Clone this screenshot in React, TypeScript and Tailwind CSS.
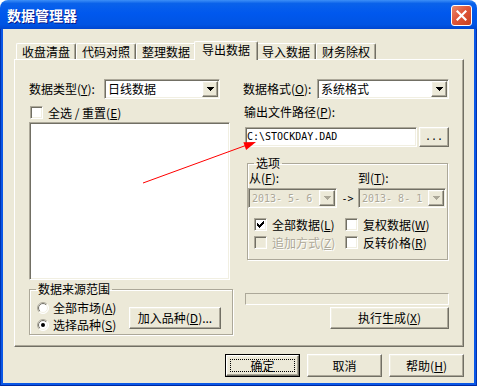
import React from "react";

const sunken =
  "border border-t-[#aca899] border-l-[#aca899] border-r-white border-b-white shadow-[inset_1px_1px_0_#716f64,inset_-1px_-1px_0_#f1efe2] p-[1px]";
const raised =
  "border border-t-white border-l-white border-r-[#716f64] border-b-[#716f64] shadow-[inset_-1px_-1px_0_#aca899,inset_1px_1px_0_#f1efe2] bg-[#ece9d8]";
const etched = "border border-[#aca899] shadow-[inset_1px_1px_0_#fff,1px_1px_0_#fff]";
const gray = "text-[#aca899] [text-shadow:1px_1px_0_#fff]";
const mono = "font-['DejaVu_Sans_Mono',monospace] text-[10px] whitespace-pre";

function Arrow({ disabled }: { disabled?: boolean }) {
  const c = disabled ? "#aca899" : "#000";
  return (
    <div className={`w-[16px] h-[16px] flex items-center justify-center shrink-0 ${raised}`}>
      <svg width="7" height="4" shapeRendering="crispEdges">
        <rect x="0" y="0" width="7" height="1" fill={c} />
        <rect x="1" y="1" width="5" height="1" fill={c} />
        <rect x="2" y="2" width="3" height="1" fill={c} />
        <rect x="3" y="3" width="1" height="1" fill={c} />
      </svg>
    </div>
  );
}

function Combo({ children, className, disabled }: { children: React.ReactNode; className?: string; disabled?: boolean }) {
  return (
    <div className={`h-[20px] flex items-center ${sunken} ${disabled ? "bg-[#ece9d8]" : "bg-white"} ${className ?? ""}`}>
      <span className={`flex-1 pl-[2px] leading-[16px] ${disabled ? gray : ""}`}>{children}</span>
      <Arrow disabled={disabled} />
    </div>
  );
}

function Check({ checked, disabled }: { checked?: boolean; disabled?: boolean }) {
  return (
    <div className={`w-[13px] h-[13px] shrink-0 flex items-center justify-center ${sunken} ${disabled ? "bg-[#ece9d8]" : "bg-white"}`}>
      {checked && (
        <svg width="7" height="7" shapeRendering="crispEdges">
          <path d="M0 2h1v3h-1zM1 3h1v3h-1zM2 4h1v3h-1zM3 3h1v3h-1zM4 2h1v3h-1zM5 1h1v3h-1zM6 0h1v3h-1z" fill="#000" />
        </svg>
      )}
    </div>
  );
}

function Radio({ checked, id }: { checked?: boolean; id: string }) {
  return (
    <svg width="12" height="12" className="shrink-0">
      <defs>
        <linearGradient id={`o${id}`} x1="0" y1="0" x2="1" y2="1">
          <stop offset="0.5" stopColor="#aca899" />
          <stop offset="0.5" stopColor="#ffffff" />
        </linearGradient>
        <linearGradient id={`i${id}`} x1="0" y1="0" x2="1" y2="1">
          <stop offset="0.5" stopColor="#716f64" />
          <stop offset="0.5" stopColor="#f1efe2" />
        </linearGradient>
      </defs>
      <circle cx="6" cy="6" r="5.5" fill="#fff" stroke={`url(#o${id})`} />
      <circle cx="6" cy="6" r="4.5" fill="#fff" stroke={`url(#i${id})`} />
      {checked && <circle cx="6" cy="6" r="2" fill="#000" />}
    </svg>
  );
}

function Btn({ children, className }: { children: React.ReactNode; className?: string }) {
  return <div className={`flex items-center justify-center leading-[14px] ${raised} ${className ?? ""}`}>{children}</div>;
}

const tabs = ["收盘清盘", "代码对照", "整理数据", "导出数据", "导入数据", "财务除权"];

export default function App() {
  return (
    <div className="relative w-[477px] h-[386px] flex flex-col rounded-t-[8px] overflow-hidden font-['Noto_Sans_CJK_SC',sans-serif] text-[12px] text-black">
      {/* title bar */}
      <div className="h-[29px] shrink-0 flex items-center bg-[linear-gradient(to_bottom,#3d8ff7_0%,#0a62ea_12%,#0058ee_45%,#0054e3_85%,#0046d0_100%)]">
        <span className="ml-[7px] text-[14px] font-bold text-white leading-[16px] [text-shadow:1px_1px_0_#0a1a8a]">数据管理器</span>
        <div className="ml-auto mr-[5px] mt-[1px] w-[21px] h-[21px] rounded-[3px] border border-white bg-[linear-gradient(135deg,#e98a6d_0%,#e0573a_45%,#c8401f_100%)] flex items-center justify-center">
          <svg width="11" height="11" viewBox="0 0 11 11">
            <path d="M1.5 1.5L9.5 9.5M9.5 1.5L1.5 9.5" stroke="#fff" strokeWidth="2.2" strokeLinecap="square" />
          </svg>
        </div>
      </div>

      {/* frame */}
      <div className="flex-1 flex px-[3px] pb-[3px] bg-[#0a57e6] shadow-[inset_1px_0_0_#0033b0,inset_-1px_0_0_#0033b0,inset_0_-1px_0_#0028a0]">
        <div className="flex-1 flex flex-col bg-[#ece9d8] pt-[12px]">
          {/* tabs */}
          <div className="h-[18px] ml-[13px] flex items-end">
            {tabs.map((t, i) =>
              i === 3 ? (
                <div
                  key={t}
                  className="relative z-10 w-[64px] h-[19px] -mx-[2px] -mb-[1px] bg-[#ece9d8] border-t border-l border-r border-t-white border-l-white border-r-[#716f64] shadow-[inset_-1px_0_0_#aca899] rounded-t-[2px] text-center pt-[1px] leading-[14px]"
                >
                  {t}
                </div>
              ) : (
                <div
                  key={t}
                  className="w-[60px] h-[16px] border-t border-l border-r border-t-white border-l-white border-r-[#716f64] shadow-[inset_-1px_0_0_#aca899] rounded-t-[2px] text-center pt-[1px] leading-[14px]"
                >
                  {t}
                </div>
              )
            )}
          </div>

          {/* panel */}
          <div className="ml-[11px] w-[450px] h-[288px] border border-t-white border-l-white border-r-[#716f64] border-b-[#716f64] shadow-[inset_-1px_-1px_0_#aca899] flex pt-[19px] pl-[14px]">
            {/* left column */}
            <div className="w-[204px] flex flex-col">
              <div className="h-[20px] flex items-center">
                <span className="w-[75px] leading-[14px]">
                  数据类型(<u>Y</u>):
                </span>
                <Combo className="w-[116px]">日线数据</Combo>
              </div>
              <div className="mt-[7px] h-[13px] flex items-center pl-[1px]">
                <Check />
                <span className="ml-[5px] leading-[14px] whitespace-pre">
                  全选 / 重置(<u>E</u>)
                </span>
              </div>
              <div className={`mt-[3px] w-[201px] h-[158px] bg-white ${sunken}`} />
              <fieldset className={`mt-[2px] w-[204px] h-[53px] ${etched}`}>
                <legend className="ml-[6px] px-[2px] leading-[14px]">数据来源范围</legend>
                <div className="flex">
                  <div className="flex flex-col gap-[4px] pl-[7px] pt-[5px]">
                    <div className="h-[13px] flex items-center">
                      <Radio id="a" />
                      <span className="ml-[4px] leading-[14px]">
                        全部市场(<u>A</u>)
                      </span>
                    </div>
                    <div className="h-[13px] flex items-center">
                      <Radio id="b" checked />
                      <span className="ml-[4px] leading-[14px]">
                        选择品种(<u>S</u>)
                      </span>
                    </div>
                  </div>
                  <Btn className="ml-auto mr-[11px] mt-[11px] w-[92px] h-[22px]">
                    加入品种(<u>D</u>)...
                  </Btn>
                </div>
              </fieldset>
            </div>

            {/* right column */}
            <div className="ml-[10px] w-[206px] flex flex-col">
              <div className="h-[20px] flex items-center">
                <span className="w-[74px] leading-[14px]">
                  数据格式(<u>O</u>):
                </span>
                <Combo className="w-[132px]">系统格式</Combo>
              </div>
              <div className="mt-[7px] pl-[1px] leading-[12px] h-[12px]">
                输出文件路径(<u>P</u>):
              </div>
              <div className="mt-[9px] flex">
                <div className={`ml-[2px] w-[172px] h-[20px] bg-white flex items-center ${sunken}`}>
                  <span className={`${mono} leading-[16px]`}>C:\STOCKDAY.DAD</span>
                </div>
                <Btn className="ml-[2px] w-[30px] h-[20px]">
                  <span className={mono}>...</span>
                </Btn>
              </div>
              <fieldset className={`mt-[10px] ml-[4px] w-[201px] h-[103px] ${etched}`}>
                <legend className="ml-[6px] px-[2px] leading-[12px]">选项</legend>
                <div className="grid grid-cols-[89px_21px_88px] pt-[3px]">
                  <span className="pl-[1px] leading-[12px] h-[12px]">
                    从(<u>F</u>):
                  </span>
                  <span />
                  <span className="leading-[12px] h-[12px]">
                    到(<u>T</u>):
                  </span>
                  <Combo disabled className="mt-[4px] w-[89px]">
                    <span className={mono}>2013- 5- 6</span>
                  </Combo>
                  <span className={`mt-[4px] h-[20px] flex items-center justify-center ${mono}`}>-&gt;</span>
                  <Combo disabled className="mt-[4px] w-[88px]">
                    <span className={mono}>2013- 8- 1</span>
                  </Combo>
                </div>
                <div className="grid grid-cols-[91px_auto] gap-y-[5px] pl-[6px] mt-[10px]">
                  <div className="h-[13px] flex items-center">
                    <Check checked />
                    <span className="ml-[5px] leading-[14px]">
                      全部数据(<u>L</u>)
                    </span>
                  </div>
                  <div className="h-[13px] flex items-center">
                    <Check />
                    <span className="ml-[5px] leading-[14px]">
                      复权数据(<u>W</u>)
                    </span>
                  </div>
                  <div className="h-[13px] flex items-center">
                    <Check disabled />
                    <span className={`ml-[5px] leading-[14px] ${gray}`}>
                      追加方式(<u>Z</u>)
                    </span>
                  </div>
                  <div className="h-[13px] flex items-center">
                    <Check />
                    <span className="ml-[5px] leading-[14px]">
                      反转价格(<u>R</u>)
                    </span>
                  </div>
                </div>
              </fieldset>
              <div className="mt-[33px] ml-[2px] w-[204px] h-[12px] border border-t-[#aca899] border-l-[#aca899] border-r-white border-b-white" />
              <Btn className="mt-[2px] ml-[87px] w-[119px] h-[22px]">
                执行生成(<u>X</u>)
              </Btn>
            </div>
          </div>

          {/* dialog buttons */}
          <div className="mt-[7px] h-[23px] flex justify-end gap-[7px] pr-[10px]">
            <div className="w-[75px] h-[23px] border border-black flex">
              <div className={`flex-1 p-[3px] flex ${raised}`}>
                <div className="flex-1 border border-dotted border-black flex items-center justify-center leading-[14px]">确定</div>
              </div>
            </div>
            <Btn className="w-[75px] h-[23px]">取消</Btn>
            <Btn className="w-[75px] h-[23px]">
              帮助(<u>H</u>)
            </Btn>
          </div>
        </div>
      </div>

      {/* red annotation arrow */}
      <svg className="absolute left-0 top-0 pointer-events-none" width="477" height="386">
        <line x1="143" y1="183" x2="247" y2="145" stroke="#ff0000" strokeWidth="1" />
        <polygon points="256,142 246.1,149.9 243.4,142.3" fill="#ff0000" />
      </svg>
    </div>
  );
}
